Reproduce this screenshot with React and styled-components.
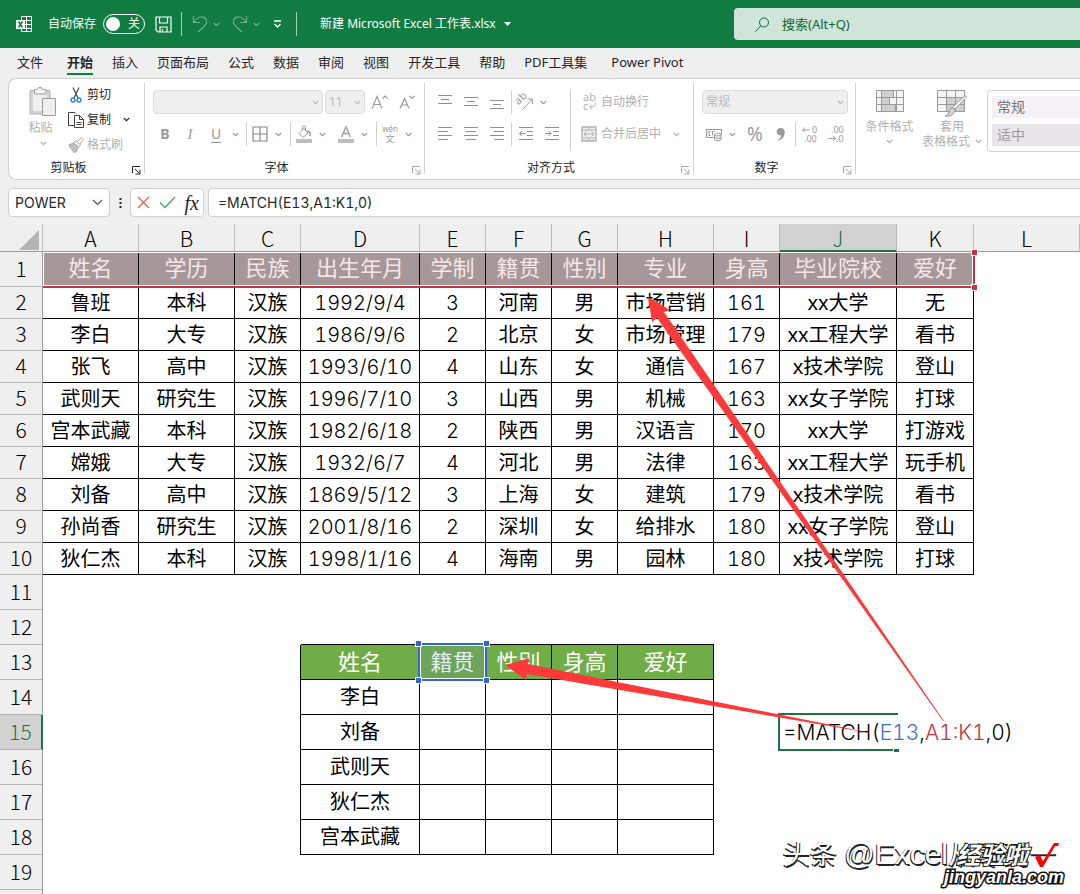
import styled, { createGlobalStyle, css } from "styled-components";

const GREEN = "#107c41";
const GREY = "#a6a6a6";
const LINE = "#d0d0d0";
const uiFont = `"Noto Sans", "Noto Sans CJK SC", sans-serif`;
const cellFont = `Inter, "Noto Sans CJK SC", sans-serif`;
const headFont = `"Noto Sans CJK SC", sans-serif`;

const GlobalStyle = createGlobalStyle`
  * {
    box-sizing: border-box;
  }
  body {
    margin: 0;
    background: #efefef;
    font-family: ${uiFont};
    font-size: 12px;
    line-height: 16px;
    color: #262626;
  }
  button, input, select {
    font: inherit;
    color: inherit;
    margin: 0;
    padding: 0;
    border: 0;
    background: none;
  }
`;

/* ---------- data ---------- */

const tabs = [
  { text: "文件", space: 24 },
  { text: "开始", active: true },
  { text: "插入" },
  { text: "页面布局" },
  { text: "公式" },
  { text: "数据" },
  { text: "审阅" },
  { text: "视图" },
  { text: "开发工具" },
  { text: "帮助" },
  { text: "PDF工具集", space: 24 },
  { text: "Power Pivot" },
];

const columns = [
  ["A", 96], ["B", 96], ["C", 66], ["D", 119], ["E", 66], ["F", 66],
  ["G", 66], ["H", 96], ["I", 66], ["J", 117], ["K", 77], ["L"],
];

const people = [
  ["姓名", "学历", "民族", "出生年月", "学制", "籍贯", "性别", "专业", "身高", "毕业院校", "爱好"],
  ["鲁班", "本科", "汉族", "1992/9/4", "3", "河南", "男", "市场营销", "161", "xx大学", "无"],
  ["李白", "大专", "汉族", "1986/9/6", "2", "北京", "女", "市场管理", "179", "xx工程大学", "看书"],
  ["张飞", "高中", "汉族", "1993/6/10", "4", "山东", "女", "通信", "167", "x技术学院", "登山"],
  ["武则天", "研究生", "汉族", "1996/7/10", "3", "山西", "男", "机械", "163", "xx女子学院", "打球"],
  ["宫本武藏", "本科", "汉族", "1982/6/18", "2", "陕西", "男", "汉语言", "170", "xx大学", "打游戏"],
  ["嫦娥", "大专", "汉族", "1932/6/7", "4", "河北", "男", "法律", "163", "xx工程大学", "玩手机"],
  ["刘备", "高中", "汉族", "1869/5/12", "3", "上海", "女", "建筑", "179", "x技术学院", "看书"],
  ["孙尚香", "研究生", "汉族", "2001/8/16", "2", "深圳", "女", "给排水", "180", "xx女子学院", "登山"],
  ["狄仁杰", "本科", "汉族", "1998/1/16", "4", "海南", "男", "园林", "180", "x技术学院", "打球"],
];

const lookup = [
  ["姓名", "籍贯", "性别", "身高", "爱好"],
  ["李白"],
  ["刘备"],
  ["武则天"],
  ["狄仁杰"],
  ["宫本武藏"],
];

const ROWS = 20;

const getCell = (row, col) => {
  if (row <= 10 && col < 11) {
    return { text: people[row - 1][col], tone: row === 1 ? "head" : "body", right: true, bottom: true };
  }
  if (row >= 13 && row <= 18) {
    if (col === 2) return { right: true };
    if (col >= 3 && col <= 7) {
      return {
        text: lookup[row - 13][col - 3],
        tone: row === 13 ? "green" : "body",
        right: true,
        bottom: true,
      };
    }
  }
  if (row === 12 && col >= 3 && col <= 7) return { bottom: true };
  return {};
};

/* ---------- title bar ---------- */

const App = styled.div`
  height: 100vh;
  display: flex;
  flex-direction: column;
  overflow: hidden;
`;

const TitleBar = styled.header`
  height: 48px;
  flex: none;
  display: flex;
  align-items: center;
  padding-left: 16px;
  background: ${GREEN};
  color: #fff;
`;

const TitleLeft = styled.div`
  flex: 0 0 718px;
  display: flex;
  align-items: center;
`;

const AutoSave = styled.label`
  display: flex;
  align-items: center;
  gap: 7px;
  margin: 0 10px 0 15px;
`;

const Toggle = styled.button`
  width: 42px;
  height: 20px;
  display: flex;
  align-items: center;
  justify-content: space-between;
  padding: 0 4px 0 2px;
  border: 1px solid #fff;
  border-radius: 10px;

  &::before {
    content: "";
    width: 14px;
    height: 14px;
    border-radius: 50%;
    background: #fff;
  }
`;

const BarButton = styled.button`
  display: flex;
  align-items: center;
  gap: 5px;
  margin-right: ${(p) => p.$after || 0}px;
  opacity: ${(p) => (p.$dim ? 0.4 : 1)};
`;

const BarLine = styled.span`
  width: 1px;
  height: 24px;
  margin-right: ${(p) => p.$after}px;
  background: #a5cfb8;
`;

const FileName = styled.button`
  display: flex;
  align-items: center;
  gap: 8px;
  white-space: nowrap;
`;

const Search = styled.label`
  flex: 1;
  height: 32px;
  display: flex;
  align-items: center;
  gap: 12px;
  padding-left: 21px;
  border-radius: 4px 0 0 4px;
  background: #cfe5d9;
  color: #0e6535;
  font-size: 13px;

  input {
    flex: 1;
    min-width: 0;
    outline: none;
  }
  input::placeholder {
    color: #0e6535;
    opacity: 1;
  }
`;

const Tabs = styled.nav`
  height: 30px;
  flex: none;
  display: flex;
  align-items: flex-start;
  padding: 3px 0 0 17px;
`;

const Tab = styled.button`
  height: 24px;
  margin-right: ${(p) => p.$space || 19}px;
  border-bottom: 2px solid ${(p) => (p.$active ? GREEN : "transparent")};
  font-size: 13px;
  font-weight: ${(p) => (p.$active ? 700 : 400)};
  white-space: nowrap;
`;

/* ---------- ribbon ---------- */

const Ribbon = styled.section`
  height: 102px;
  flex: none;
  display: flex;
  margin-left: 8px;
  overflow: hidden;
  border: 1px solid ${LINE};
  border-right: 0;
  border-radius: 8px 0 0 8px;
  background: #fff;
`;

const Group = styled.div`
  width: ${(p) => p.$width}px;
  flex: none;
  display: flex;
  flex-direction: column;
  padding: 3px 0;
`;

const GroupLine = styled.span`
  width: 1px;
  flex: none;
  margin: 4px 0 5px;
  background: ${LINE};
`;

const GroupBody = styled.div`
  flex: 1;
  display: flex;
`;

const GroupFooter = styled.div`
  height: 16px;
  display: flex;
  text-align: center;

  span {
    flex: 1;
  }
`;

const Launcher = styled.button`
  width: 16px;
  display: flex;
  align-items: flex-end;
  justify-content: center;
  padding-bottom: 1px;
  color: ${(p) => (p.$on ? "#262626" : GREY)};
`;

const Stack = styled.div`
  width: ${(p) => (p.$width ? p.$width + "px" : "auto")};
  display: flex;
  flex-direction: column;
  padding-top: 4px;
`;

const ToolRow = styled.div`
  height: 32px;
  display: flex;
  align-items: center;
  padding-left: ${(p) => p.$left || 0}px;
  gap: ${(p) => p.$gap || 0}px;
  color: ${GREY};
`;

const ToolButton = styled.button`
  width: ${(p) => p.$width || 26}px;
  height: 24px;
  flex: none;
  display: flex;
  align-items: center;
  justify-content: center;
  color: #9a9a9a;
`;

const Letter = styled(ToolButton)`
  font-size: ${(p) => p.$size || 14}px;
  font-weight: ${(p) => (p.$bold ? 700 : 400)};
  font-style: ${(p) => (p.$italic ? "italic" : "normal")};
  font-family: ${(p) => (p.$italic ? `"Liberation Serif", serif` : uiFont)};
  text-decoration: ${(p) => (p.$underline ? "underline" : "none")};
  text-underline-offset: 3px;
`;

const Split = styled.button`
  display: flex;
  align-items: center;
  flex: none;
  margin-right: ${(p) => p.$after || 0}px;
  color: #9a9a9a;

  > :last-child {
    margin-left: 7px;
    margin-right: 3px;
  }
`;

const RowLine = styled.span`
  width: 1px;
  height: 24px;
  flex: none;
  margin: 0 ${(p) => p.$space || 1}px;
  background: ${LINE};
`;

const TallLine = styled.span`
  width: 1px;
  height: 62px;
  margin-top: 7px;
  background: ${LINE};
`;

const TextTool = styled.button`
  display: flex;
  align-items: center;
  gap: 4px;
  color: #b0b0b0;
  white-space: nowrap;

  svg:last-child:not(:first-child) {
    margin-left: 8px;
  }
`;

const Pick = styled.label`
  position: relative;
  width: ${(p) => p.$width}px;
  height: 24px;
  display: flex;
  align-items: center;
  border: 1px solid #dcdcdc;
  border-radius: 4px;
  background: #efefef;
  color: #b8b8b8;

  select {
    width: 100%;
    height: 100%;
    padding-left: 3px;
    appearance: none;
    opacity: 1;
  }
  svg {
    position: absolute;
    right: 3px;
  }
`;

const Paste = styled.button`
  width: 48px;
  display: flex;
  flex-direction: column;
  align-items: center;
  margin-left: 10px;
  padding-top: 4px;
  color: #b0b0b0;

  span {
    margin: 3px 5px 5px 0;
  }
`;

const ClipList = styled.div`
  display: flex;
  flex-direction: column;
  margin-left: 1px;
`;

const ClipItem = styled.button`
  height: 25px;
  display: flex;
  align-items: center;
  gap: 3px;
  color: ${(p) => (p.$off ? "#b0b0b0" : "#262626")};

  svg:last-child:not(:first-child) {
    margin-left: 9px;
  }
`;

const BigButton = styled.button`
  width: ${(p) => p.$width}px;
  flex: none;
  display: flex;
  flex-direction: column;
  align-items: center;
  padding-top: 11px;
  color: #b0b0b0;
  line-height: 15px;

  > svg:first-child {
    margin-bottom: 2px;
  }
  span {
    min-height: 15px;
    display: flex;
    align-items: center;
    gap: 5px;
    white-space: nowrap;
  }
`;

const StyleBox = styled.div`
  flex: 1;
  height: 62px;
  display: flex;
  flex-direction: column;
  gap: 6px;
  margin: 11px 0 0 6px;
  padding: 5px 0 0 4px;
  border: 1px solid ${LINE};
  border-right: 0;
  border-radius: 4px 0 0 4px;
`;

const StyleItem = styled.button`
  height: 22px;
  padding-left: 5px;
  text-align: left;
  font-size: 14px;
  line-height: 20px;
  background: ${(p) => p.$bg};
  color: ${(p) => p.$color};
`;

/* ---------- formula bar ---------- */

const FormulaBar = styled.div`
  height: 44px;
  flex: none;
  display: flex;
  align-items: flex-start;
  padding: 8px 0 0 8px;
  font-family: ${cellFont};
  font-size: 14px;
  font-variant-numeric: tabular-nums;
`;

const Field = styled.div`
  width: ${(p) => (p.$width ? p.$width + "px" : "auto")};
  flex: ${(p) => (p.$grow ? 1 : "none")};
  height: 29px;
  display: flex;
  align-items: center;
  justify-content: space-between;
  margin-left: ${(p) => (p.$grow ? 4 : 0)}px;
  padding: 0 ${(p) => p.$pad || 6}px 0 6px;
  border: 1px solid ${LINE};
  border-right-width: ${(p) => (p.$grow ? 0 : 1)}px;
  border-radius: ${(p) => (p.$grow ? "4px 0 0 4px" : "4px")};
  background: #fff;

  input {
    flex: 1;
    min-width: 0;
    outline: none;
  }
  button {
    display: flex;
  }
`;

const FormulaInput = styled.input`
  padding-left: 3px;
`;

const Grip = styled.span`
  width: 20px;
  height: 29px;
  display: flex;
  align-items: center;
  justify-content: center;
`;

const Fx = styled.span`
  font-family: "Liberation Serif", serif;
  font-size: 20px;
  font-style: italic;
  line-height: 20px;
  color: #262626;
`;

/* ---------- sheet ---------- */

const Sheet = styled.main`
  position: relative;
  flex: 1;
  min-height: 0;
  overflow: hidden;
  background: #fff;
`;

const Grid = styled.table`
  width: 100%;
  table-layout: fixed;
  border-collapse: separate;
  border-spacing: 0;
  font-family: ${cellFont};
  font-size: 20px;
  line-height: 26px;
  font-variant-numeric: tabular-nums;
  color: #000;
`;

const Corner = styled.td`
  height: 28px;
  padding: 4px 3px 0 0;
  border-right: 1px solid #bdbdbd;
  border-bottom: 1px solid #9b9b9b;
  background: #efefef;

  svg {
    display: block;
    margin-left: auto;
  }
`;

const activeHead = css`
  background: #d2d2d2;
  color: #217346;
`;

const ColHead = styled.th`
  height: 28px;
  padding: 2px 0 0;
  border-right: 1px solid #bdbdbd;
  border-bottom: 1px solid #9b9b9b;
  background: #efefef;
  font-family: ${headFont};
  font-size: 21px;
  font-weight: 300;
  line-height: 23px;
  ${(p) => p.$active && activeHead}
  ${(p) => p.$active && "border-bottom: 2px solid #217346;"}
`;

const RowHead = styled.th`
  padding: 0 0 3px;
  border-right: 1px solid #9b9b9b;
  border-bottom: 1px solid #b4b4b4;
  background: #efefef;
  font-family: ${headFont};
  font-size: 21px;
  font-weight: 300;
  ${(p) => p.$active && activeHead}
  ${(p) => p.$active && "border-right: 2px solid #217346;"}
`;

const Row = styled.tr`
  height: ${(p) => p.$height}px;
`;

const tones = {
  head: css`
    padding-bottom: 2px;
    background: #a69898;
    color: #f6e6e6;
    font-size: 22px;
  `,
  green: css`
    background: #70ad47;
    color: #fff;
    font-size: 22px;
  `,
};

const Cell = styled.td`
  position: relative;
  padding: 0;
  text-align: center;
  white-space: nowrap;
  border-right: ${(p) => (p.$right ? "1px solid #000" : "0")};
  border-bottom: ${(p) => (p.$bottom ? "1px solid #000" : "0")};
  ${(p) => tones[p.$tone]}
`;

const School = styled.span`
  font-family: ${uiFont};
`;

const Numeric = styled.span`
  font-weight: 300;
`;

const Handle = styled.i`
  position: absolute;
  width: 7px;
  height: 7px;
  border: 1px solid #fff;
  background: ${(p) => p.$color};
  ${(p) => p.$at}
`;

const BlueFrame = styled.div`
  position: absolute;
  inset: -2px;
  z-index: 1;
  border: 2px solid #3269c8;
  box-shadow: inset 0 0 0 1px #fff;
  background: rgba(80, 120, 200, 0.14);
`;

const RedFrame = styled.div`
  position: absolute;
  left: 43px;
  top: 28px;
  width: 932px;
  height: 36px;
  border: solid #c5333f;
  border-width: 0 2px 2px 0;
  box-shadow: inset 0 0 0 1px #fff;
`;

const Editor = styled.div`
  position: absolute;
  inset: -2px -1px -1px -2px;
  z-index: 1;
  border: 2px solid #217346;
  border-right: 0;
  text-align: left;
  font-size: 21px;
  font-weight: 300;
  line-height: 35px;
  padding-left: 3px;

  &::after {
    content: "";
    position: absolute;
    right: -1px;
    bottom: -3px;
    width: 5px;
    height: 3px;
    border-left: 1px solid #fff;
    background: #217346;
  }
`;

const Ref = styled.span`
  color: ${(p) => p.$color};
`;

const Arrows = styled.svg`
  position: absolute;
  left: 0;
  top: 0;
  z-index: 2;
  pointer-events: none;
`;

const Watermark = styled.div`
  position: absolute;
  right: 16px;
  bottom: 5px;
  z-index: 3;
  display: grid;
  justify-items: end;
  white-space: nowrap;
`;

const Author = styled.div`
  grid-area: 1 / 1;
  margin-right: 8px;
  font-family: "Liberation Sans", "Noto Sans CJK SC", sans-serif;
  font-size: 27px;
  line-height: 36px;
  color: #fff;
  text-shadow: -1px 1px 0 #222, 1px 2px 0 #222;

  span {
    font-size: 30px;
  }
`;

const Site = styled.div`
  grid-area: 1 / 1;
  display: flex;
  align-items: center;
  gap: 6px;
  margin-right: 4px;
  z-index: 1;
  color: #fff;
  font-size: 24px;
  font-weight: 700;
  font-style: italic;
  line-height: 36px;
  -webkit-text-stroke: 2px #111;
  paint-order: stroke fill;
`;

const SiteUrl = styled.div`
  margin-top: -8px;
  color: #fff;
  font-family: "Liberation Sans", sans-serif;
  font-size: 18px;
  font-weight: 700;
  font-style: italic;
  line-height: 24px;
  -webkit-text-stroke: 3px #111;
  paint-order: stroke fill;
`;

/* ---------- icons ---------- */

const Icon = ({ w = 16, h = 16, children, ...rest }) => (
  <svg
    width={w}
    height={h}
    viewBox={`0 0 ${w} ${h}`}
    fill="none"
    stroke="currentColor"
    overflow="visible"
    aria-hidden="true"
    {...rest}
  >
    {children}
  </svg>
);

const Chevron = () => (
  <Icon w={7} h={5}>
    <path d="M0.8 1l2.7 2.6L6.2 1" strokeWidth="1.2" />
  </Icon>
);

const ExcelLogo = () => (
  <Icon w={17} h={17}>
    <path d="M5.500 0.500h10v15h-10zM10.500 0.500v15M5.500 4.500h10M5.500 8.500h10M5.500 12.500h10" />
    <path d="M0 4h9v9H0z" fill="#fff" stroke="none" />
    <path d="M2.500 5.500l4 6M6.500 5.500l-4 6" stroke={GREEN} strokeWidth="1.500" />
  </Icon>
);

const SaveIcon = () => (
  <Icon w={17} h={17}>
    <path d="M1 1h15v15H3l-2-2zM4.500 1v6h8V1M5 16v-5h7v5M7.500 13v3" strokeWidth="1.200" />
  </Icon>
);

const UndoIcon = () => (
  <Icon w={16} h={18}>
    <path d="M1.500 1v6.500H8M1.500 7.500C4 4 6 2 9.500 2c5 0 6.500 5 3.500 8.500L6 17" strokeWidth="1.200" />
  </Icon>
);

const RedoIcon = () => (
  <Icon w={16} h={18}>
    <path d="M14.500 1v6.500H8M14.500 7.500C12 4 10 2 6.500 2c-5 0-6.500 5-3.500 8.500L10 17" strokeWidth="1.200" />
  </Icon>
);

const CustomIcon = () => (
  <Icon w={9} h={8}>
    <path d="M1 1h7M1.500 4l3 3 3-3" strokeWidth="1.300" />
  </Icon>
);

const SearchIcon = () => (
  <Icon w={15} h={15}>
    <circle cx="9" cy="5.500" r="4.500" />
    <path d="M5.800 8.800L0.500 14.500" />
  </Icon>
);

const LaunchIcon = () => (
  <Icon w={9} h={9}>
    <path d="M0.500 7V0.500H8M3 3l4.500 4.500M8 3.500V8H3.500" />
  </Icon>
);

const PasteIcon = () => (
  <Icon w={28} h={31}>
    <path d="M1 4.500h20V28H1z" fill="#d4d4d4" stroke="#b0b0b0" />
    <path d="M4 7.500h14V25H4z" fill="#efefef" stroke="none" />
    <path d="M5.500 8V3.500H8A3.200 3.200 0 0 1 14 3.500h3V8z" fill="#f4f4f4" stroke="#a0a0a0" />
    <path d="M13.500 12.500h13v17h-13z" fill="#efefef" stroke="#9a9a9a" />
  </Icon>
);

const CutIcon = () => (
  <Icon>
    <path d="M5 0.500l5 10.500M11 0.500L6 11" stroke="#505050" strokeWidth="1.300" />
    <circle cx="5" cy="13" r="2" stroke="#2b88c8" strokeWidth="1.400" />
    <circle cx="11" cy="13" r="2" stroke="#2b88c8" strokeWidth="1.400" />
  </Icon>
);

const CopyIcon = () => (
  <Icon>
    <path d="M6 13.500H0.500V0.500H7l1 1" stroke="#404040" />
    <path d="M6.500 3.500h5l4 4v8h-9zM11.500 3.500v4h4M8.500 10.500h5M8.500 12.500h5" stroke="#404040" />
  </Icon>
);

const PainterIcon = () => (
  <Icon stroke="#a6a6a6">
    <path d="M0.500 8l5-2 4.500 4.500-1.500 4L6 15.500z" fill="#c8c8c8" />
    <path d="M5.500 5.500L8 3.500l4.500 4.500-2 2.500z" fill="#efefef" />
    <path d="M9.500 4.500L13.500 0.500 15.500 2.500l-3.500 4.500" />
    <path d="M2.500 9.500l3-1.500M4.500 12l3-2" />
  </Icon>
);

const BordersIcon = () => (
  <Icon>
    <path d="M1 1h14v14H1zM8 1v14M1 8h14" strokeWidth="1.200" stroke="#8a8a8a" />
  </Icon>
);

const FillIcon = () => (
  <Icon h={17}>
    <path d="M3 7.500L8 2.500l4 4.500-5 4.500zM6.500 4V1.500a1.500 1.500 0 0 1 3 0V5" />
    <path d="M11 5c2.500 0 3.500 2 3 5" strokeWidth="1.600" />
    <path d="M0 13h16v4H0z" fill="#bdbdbd" stroke="none" />
  </Icon>
);

const FontColorIcon = () => (
  <Icon h={17}>
    <path d="M3.500 11L8 0.800 12.500 11M5 7.500h6" strokeWidth="1.300" />
    <path d="M0 13h16v4H0z" fill="#bdbdbd" stroke="none" />
  </Icon>
);

const SizeIcon = ({ up }) => (
  <Icon w={18} h={16}>
    {up ? (
      <path d="M1 14.500L6 2.500 11 14.500M3 10.500h6M11.500 4.500L14 2l2.500 2.500" strokeWidth="1.200" />
    ) : (
      <path d="M2 14.500L6.500 4.500 11 14.500M3.500 11h6M11.500 2L14 4.500 16.500 2" strokeWidth="1.200" />
    )}
  </Icon>
);

// line stacks: [x1, x2, y] for every stroke
const lineSets = {
  top: [[1, 15, 2], [4, 12, 6], [1, 15, 10]],
  middle: [[1, 15, 4], [4, 12, 8], [1, 15, 12]],
  bottom: [[1, 15, 7], [4, 12, 11], [1, 15, 15]],
  left: [[1, 15, 2], [1, 11, 6], [1, 15, 10], [1, 11, 14]],
  center: [[1, 15, 2], [3, 13, 6], [1, 15, 10], [3, 13, 14]],
  right: [[1, 15, 2], [5, 15, 6], [1, 15, 10], [5, 15, 14]],
};

const LinesIcon = ({ kind }) => (
  <Icon stroke="#8f8f8f">
    {lineSets[kind].map(([a, b, y]) => (
      <path key={y} d={`M${a} ${y - 0.5}H${b}`} />
    ))}
  </Icon>
);

const IndentIcon = ({ out }) => (
  <Icon stroke="#8f8f8f">
    <path d="M1 1.500h14M9 5.500h6M9 9.500h6M1 13.500h14" />
    <path d={out ? "M7.500 7.500h-6M4 5L1.500 7.500 4 10" : "M1 7.500h6M4.500 5L7 7.500 4.500 10"} />
  </Icon>
);

const OrientIcon = () => (
  <Icon>
    <text x="1" y="10" fontSize="11" fill="currentColor" stroke="none" transform="rotate(-45 3 10)" fontFamily="Noto Sans">ab</text>
    <path d="M5.500 15.500L15 5.500M10.500 5h5v5" />
  </Icon>
);

const WrapIcon = () => (
  <Icon w={16} h={18}>
    <text x="2" y="8" fontSize="11" fill="currentColor" stroke="none" fontFamily="Noto Sans">ab</text>
    <text x="2" y="17" fontSize="11" fill="currentColor" stroke="none" fontFamily="Noto Sans">c</text>
    <path d="M14 9.500c2 3-1 4.500-5 4.500M11 11.500L8.500 14l2.500 2.500" />
  </Icon>
);

const MergeIcon = () => (
  <Icon>
    <path d="M1 1h14v14H1z" fill="#efefef" strokeWidth="1.300" />
    <path d="M1 4h14M1 12h14M8 1v3M8 12v3M3 8h10M5.500 5.500L3 8l2.500 2.500M10.500 5.500L13 8l-2.500 2.500" />
  </Icon>
);

const MoneyIcon = () => (
  <Icon>
    <path d="M8 11.500H0.500v-8h15V8M4.500 5.500h-1.500v4h1.500M6.500 9.500v-4h2" strokeWidth="1.100" />
    <path d="M8.500 8.500c0-1.800 6.500-1.800 6.500 0v5c0 1.800-6.500 1.800-6.500 0zM8.500 8.500c0 1.800 6.500 1.800 6.500 0M8.500 11c0 1.800 6.500 1.800 6.500 0" fill="#efefef" />
  </Icon>
);

const CommaIcon = () => (
  <Icon w={10} h={14}>
    <path d="M4.500 1a3.800 3.800 0 0 1 4.200 4.200C8.700 9.500 6 12.500 2.500 13.500l-.5-1C4 11.500 5.200 10 5.500 8.200A3.700 3.700 0 1 1 4.500 1z" fill="currentColor" stroke="none" />
  </Icon>
);

const DecimalIcon = ({ more }) => (
  <Icon w={16} h={18} fontFamily="Noto Sans" fontSize="9">
    <g fill="currentColor" stroke="none">
      <text x={more ? 10 : 3} y="8">{more ? "0" : ".00"}</text>
      <text x={more ? 2 : 8} y="17">{more ? ".00" : ".0"}</text>
    </g>
    <path d={more ? "M7.500 5H0.500M3 2.500L0.500 5 3 7.500" : "M0.500 13.500h7M5 11l2.500 2.500L5 16"} />
  </Icon>
);

const CondIcon = () => (
  <Icon w={28} h={27} stroke="#9a9a9a">
    <path d="M0.500 0.500h27v21h-27z" fill="#f4f4f4" />
    <path d="M6 1h11v6H6zM6 8h7v6H6zM6 15h13v6H6z" fill="#cfcfcf" stroke="none" />
    <path d="M5.500 0.500v21M20.500 0.500v21M17.500 0.500v7M0.500 7.500h27M0.500 14.500h27M13.500 7.500v7M19.500 14.500v7" />
  </Icon>
);

const TableIcon = () => (
  <Icon w={30} h={27} stroke="#9a9a9a">
    <path d="M0.500 0.500h27v21h-27z" fill="#f4f4f4" />
    <path d="M10 8h17v13H10z" fill="#cfcfcf" stroke="none" />
    <path d="M9.500 0.500v21M18.500 0.500v21M0.500 7.500h27M0.500 14.500h27" />
    <path d="M29.500 7L18 19l-3-1L27 6.500c1.500-1 3-.5 2.500.5z" fill="#fff" />
    <path d="M18 19c0 5-4 8-10 7 3-1 3-2 4-5s4-4 6-2z" fill="#cfcfcf" />
  </Icon>
);

/* ---------- parts ---------- */

const Footer = ({ title, on }) => (
  <GroupFooter>
    <span>{title}</span>
    <Launcher $on={on} aria-label={title}>
      <LaunchIcon />
    </Launcher>
  </GroupFooter>
);

const Dropdown = ({ label, width, value }) => (
  <Pick $width={width}>
    <select aria-label={label} defaultValue={value} disabled>
      <option>{value}</option>
    </select>
    <Chevron />
  </Pick>
);

const Title = () => (
  <TitleBar>
    <TitleLeft>
      <ExcelLogo />
      <AutoSave>
        自动保存
        <Toggle role="switch" aria-checked="false">关</Toggle>
      </AutoSave>
      <BarButton $after={9} aria-label="保存"><SaveIcon /></BarButton>
      <BarLine $after={10} />
      <BarButton $dim $after={12} aria-label="撤消"><UndoIcon /><Chevron /></BarButton>
      <BarButton $dim $after={13} aria-label="恢复"><RedoIcon /><Chevron /></BarButton>
      <BarButton $after={14} aria-label="自定义快速访问工具栏"><CustomIcon /></BarButton>
      <BarLine $after={23} />
      <FileName>
        新建 Microsoft Excel 工作表.xlsx
        <Icon w={7} h={4}><path d="M0 0h7L3.500 4z" fill="#fff" stroke="none" /></Icon>
      </FileName>
    </TitleLeft>
    <Search>
      <SearchIcon />
      <input placeholder="搜索(Alt+Q)" aria-label="搜索" />
    </Search>
  </TitleBar>
);

const RibbonBar = () => (
  <Ribbon>
    <Group $width={135}>
      <GroupBody>
        <Paste>
          <PasteIcon />
          <span>粘贴</span>
          <Chevron />
        </Paste>
        <ClipList>
          <ClipItem><CutIcon />剪切</ClipItem>
          <ClipItem><CopyIcon />复制<Chevron /></ClipItem>
          <ClipItem $off><PainterIcon />格式刷</ClipItem>
        </ClipList>
      </GroupBody>
      <Footer title="剪贴板" on />
    </Group>
    <GroupLine />
    <Group $width={279}>
      <GroupBody>
        <Stack>
          <ToolRow $left={8} $gap={2}>
            <Dropdown label="字体" width={170} value="" />
            <Dropdown label="字号" width={40} value="11" />
            <ToolButton aria-label="增大字号"><SizeIcon up /></ToolButton>
            <ToolButton aria-label="减小字号" $width={24}><SizeIcon /></ToolButton>
          </ToolRow>
          <ToolRow $left={8}>
            <Letter $bold $width={24}>B</Letter>
            <Letter $italic $size={15}>I</Letter>
            <Letter $underline>U</Letter>
            <ToolButton aria-label="下划线" $width={12}><Chevron /></ToolButton>
            <RowLine $space={5} />
            <Split aria-label="边框"><BordersIcon /><Chevron /></Split>
            <RowLine $space={5} />
            <Split aria-label="填充颜色" $after={9}><FillIcon /><Chevron /></Split>
            <Split aria-label="字体颜色"><FontColorIcon /><Chevron /></Split>
            <RowLine $space={5} />
            <Split aria-label="拼音">
              <Icon w={16} h={18} fontFamily="Noto Sans, Noto Sans CJK SC" textAnchor="middle">
                <text x="8" y="7" fontSize="8" fill="currentColor" stroke="none">wén</text>
                <text x="8" y="17" fontSize="9" fill="currentColor" stroke="none">文</text>
              </Icon>
              <Chevron />
            </Split>
          </ToolRow>
        </Stack>
      </GroupBody>
      <Footer title="字体" />
    </Group>
    <GroupLine />
    <Group $width={268}>
      <GroupBody>
        <Stack $width={145}>
          <ToolRow $left={7}>
            {["top", "middle", "bottom"].map((k) => (
              <ToolButton key={k} aria-label={k}><LinesIcon kind={k} /></ToolButton>
            ))}
            <RowLine />
            <ToolButton $width={24} aria-label="方向"><OrientIcon /></ToolButton>
            <ToolButton $width={12} aria-label="方向选项"><Chevron /></ToolButton>
          </ToolRow>
          <ToolRow $left={7}>
            {["left", "center", "right"].map((k) => (
              <ToolButton key={k} aria-label={k}><LinesIcon kind={k} /></ToolButton>
            ))}
            <RowLine />
            <ToolButton aria-label="减少缩进量"><IndentIcon out /></ToolButton>
            <ToolButton aria-label="增加缩进量"><IndentIcon /></ToolButton>
          </ToolRow>
        </Stack>
        <TallLine />
        <Stack>
          <ToolRow $left={10}>
            <TextTool><WrapIcon />自动换行</TextTool>
          </ToolRow>
          <ToolRow $left={10}>
            <TextTool><MergeIcon />合并后居中<Chevron /></TextTool>
          </ToolRow>
        </Stack>
      </GroupBody>
      <Footer title="对齐方式" />
    </Group>
    <GroupLine />
    <Group $width={161}>
      <GroupBody>
        <Stack>
          <ToolRow $left={8}>
            <Dropdown label="数字格式" width={146} value="常规" />
          </ToolRow>
          <ToolRow $left={12}>
            <Split aria-label="会计数字格式" $after={3}><MoneyIcon /><Chevron /></Split>
            <Letter $size={19}>%</Letter>
            <ToolButton aria-label="千位分隔"><CommaIcon /></ToolButton>
            <RowLine />
            <ToolButton aria-label="增加小数位数"><DecimalIcon more /></ToolButton>
            <ToolButton aria-label="减少小数位数"><DecimalIcon /></ToolButton>
          </ToolRow>
        </Stack>
      </GroupBody>
      <Footer title="数字" />
    </Group>
    <GroupLine />
    <BigButton $width={67}>
      <CondIcon />
      <span>条件格式</span>
      <span><Chevron /></span>
    </BigButton>
    <BigButton $width={58}>
      <TableIcon />
      <span>套用</span>
      <span>表格格式<Chevron /></span>
    </BigButton>
    <StyleBox>
      <StyleItem $bg="#f5f1f7" $color="#767676">常规</StyleItem>
      <StyleItem $bg="#e9e5eb" $color="#9e9a9e">适中</StyleItem>
    </StyleBox>
  </Ribbon>
);

const Formula = () => (
  <FormulaBar>
    <Field $width={102}>
      <input aria-label="名称框" defaultValue="POWER" />
      <button aria-label="名称列表">
        <Icon w={11} h={7}><path d="M1 1l4.500 4.500L10 1" stroke="#505050" strokeWidth="1.200" /></Icon>
      </button>
    </Field>
    <Grip>
      <Icon w={3} h={12}><path d="M1.500 1v2M1.500 5v2M1.500 9v2" strokeWidth="2" /></Icon>
    </Grip>
    <Field $width={74} $pad={4}>
      <button aria-label="取消">
        <Icon w={13} h={13}><path d="M1 1l11 11M12 1L1 12" stroke="#ea5a5a" strokeWidth="1.300" /></Icon>
      </button>
      <button aria-label="输入">
        <Icon w={17} h={13}><path d="M1 6.500L6 11.500 16 1" stroke="#4ba567" strokeWidth="1.400" /></Icon>
      </button>
      <button aria-label="插入函数"><Fx>fx</Fx></button>
    </Field>
    <Field $grow>
      <FormulaInput aria-label="编辑栏" defaultValue="=MATCH(E13,A1:K1,0)" />
    </Field>
  </FormulaBar>
);

const corners = [
  "left: -5px; top: -5px;",
  "right: -5px; top: -5px;",
  "left: -5px; bottom: -5px;",
  "right: -5px; bottom: -5px;",
];

const CellContent = ({ row, col, text }) => {
  if (row === 13 && col === 4) {
    return (
      <>
        {text}
        <BlueFrame>
          {corners.map((c) => (
            <Handle key={c} $at={c} $color="#3269c8" />
          ))}
        </BlueFrame>
      </>
    );
  }
  if (row === 15 && col === 9) {
    return (
      <Editor>
        =MATCH(<Ref $color="#3b6fd0">E13</Ref>,<Ref $color="#c5333f">A1:K1</Ref>,0)
      </Editor>
    );
  }
  if (row > 1 && col === 9) return <School>{text}</School>;
  return /^\d/.test(text) ? <Numeric>{text}</Numeric> : text;
};

const SheetGrid = () => (
  <Grid>
    <colgroup>
      <col width="43" />
      {columns.map(([name, width]) => (
        <col key={name} width={width} />
      ))}
    </colgroup>
    <thead>
      <tr>
        <Corner>
          <Icon w={20} h={20}><path d="M20 0v20H0z" fill="#b4b4b4" stroke="none" /></Icon>
        </Corner>
        {columns.map(([name]) => (
          <ColHead key={name} scope="col" $active={name === "J"}>{name}</ColHead>
        ))}
      </tr>
    </thead>
    <tbody>
      {Array.from({ length: ROWS }, (_, i) => i + 1).map((row) => (
        <Row key={row} $height={row > 1 && row <= 10 ? 32 : 35}>
          <RowHead scope="row" $active={row === 15}>{row}</RowHead>
          {columns.map(([name], col) => {
            const { text, tone, right, bottom } = getCell(row, col);
            return (
              <Cell key={name} $tone={tone} $right={right} $bottom={bottom}>
                <CellContent row={row} col={col} text={text} />
              </Cell>
            );
          })}
        </Row>
      ))}
    </tbody>
  </Grid>
);

export default function Workbook() {
  return (
    <App>
      <GlobalStyle />
      <Title />
      <Tabs>
        {tabs.map((t) => (
          <Tab key={t.text} $active={t.active} $space={t.space}>{t.text}</Tab>
        ))}
      </Tabs>
      <RibbonBar />
      <Formula />
      <Sheet>
        <SheetGrid />
        <RedFrame>
          <Handle $at="right: -5px; bottom: -5px;" $color="#c5333f" />
          <Handle $at="right: -5px; top: -3px;" $color="#c5333f" />
        </RedFrame>
        <Arrows width="1080" height="670" fill="#fc3a3a" aria-hidden="true">
          <path d="M648 73L670 86 664 88 944 497 943 497 657 94 652 98z" />
          <path d="M505 441L529 434 528 440 876 510 527 450 526 456z" />
        </Arrows>
        <Watermark>
          <Author>头条 <span>@Excel</span>从零到一</Author>
          <Site>
            经验啦
            <Icon w={26} h={26}>
              <path d="M1 15l5-2 3 6L20 1h5l-1 3h-3L9 25H6z" fill="#f00" stroke="none" />
            </Icon>
          </Site>
          <SiteUrl>jingyanla.com</SiteUrl>
        </Watermark>
      </Sheet>
    </App>
  );
}
